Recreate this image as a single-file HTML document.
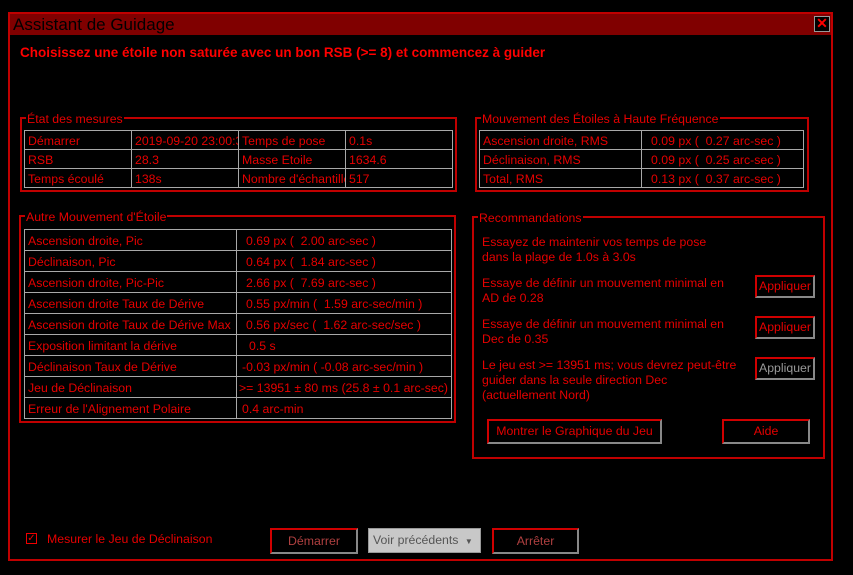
<!DOCTYPE html>
<html><head><meta charset="utf-8"><style>
*{box-sizing:border-box;margin:0;padding:0}
body{width:853px;height:575px;background:#000;position:relative;overflow:hidden;font-family:"Liberation Sans",Arial,sans-serif;font-size:12px;color:#e60000}
.a{position:absolute}
.frame{left:8px;top:12px;width:825px;height:549px;border:2px solid #c00000}
.title{left:10px;top:14px;width:821px;height:21px;background:#800000;color:#000;font-size:17px;line-height:22px;padding-left:3px}
.close{left:814px;top:16px;width:16px;height:16px;border:1px solid #999;background:#000;color:#f00;font-weight:bold;font-size:14px;line-height:13px;text-align:center}
.head{left:20px;top:45px;font-weight:bold;font-size:13.5px;color:#f00}
.grp{border:2px solid #c00000}
.lg{position:absolute;top:-7px;left:4px;background:#000;padding:0 1px;line-height:14px;font-size:12.3px}
table{position:absolute;border-collapse:collapse}
td{border:1px solid #a8a8a8;padding:2px 0 0 3px;white-space:nowrap;overflow:hidden;line-height:14px;font-size:12.3px}
.btn{border:2px solid #d00000;border-right-color:#888;border-bottom-color:#888;text-align:center;color:#e60000;font-size:12.3px}
.t{line-height:15px;font-size:12.3px}
</style></head><body>
<div class="a frame"></div>
<div class="a title">Assistant de Guidage</div>
<div class="a close">✕</div>
<div class="a head">Choisissez une étoile non saturée avec un bon RSB (&gt;= 8) et commencez à guider</div>

<div class="a grp" style="left:20px;top:117px;width:437px;height:75px"><span class="lg">État des mesures</span></div>
<table style="left:24px;top:130px;width:429px">
<tr style="height:19px"><td style="width:107px">Démarrer</td><td style="width:107px;max-width:107px">2019-09-20 23:00:38</td><td style="width:107px;max-width:107px">Temps de pose</td><td>0.1s</td></tr>
<tr style="height:19px"><td>RSB</td><td>28.3</td><td>Masse Etoile</td><td>1634.6</td></tr>
<tr style="height:19px"><td>Temps écoulé</td><td>138s</td><td style="max-width:107px">Nombre d'échantillons</td><td>517</td></tr>
</table>

<div class="a grp" style="left:475px;top:117px;width:334px;height:75px"><span class="lg">Mouvement des Étoiles à Haute Fréquence</span></div>
<table style="left:479px;top:130px;width:325px">
<tr style="height:19px"><td style="width:162px">Ascension droite, RMS</td><td style="padding-left:9px">0.09 px (&nbsp; 0.27 arc-sec )</td></tr>
<tr style="height:19px"><td>Déclinaison, RMS</td><td style="padding-left:9px">0.09 px (&nbsp; 0.25 arc-sec )</td></tr>
<tr style="height:19px"><td>Total, RMS</td><td style="padding-left:9px">0.13 px (&nbsp; 0.37 arc-sec )</td></tr>
</table>

<div class="a grp" style="left:19px;top:215px;width:437px;height:208px"><span class="lg">Autre Mouvement d'Étoile</span></div>
<table style="left:24px;top:229px;width:428px">
<tr style="height:21px"><td style="width:212px">Ascension droite, Pic</td><td style="padding-left:9px">0.69 px (&nbsp; 2.00 arc-sec )</td></tr>
<tr style="height:21px"><td>Déclinaison, Pic</td><td style="padding-left:9px">0.64 px (&nbsp; 1.84 arc-sec )</td></tr>
<tr style="height:21px"><td>Ascension droite, Pic-Pic</td><td style="padding-left:9px">2.66 px (&nbsp; 7.69 arc-sec )</td></tr>
<tr style="height:21px"><td>Ascension droite Taux de Dérive</td><td style="padding-left:9px">0.55 px/min (&nbsp; 1.59 arc-sec/min )</td></tr>
<tr style="height:21px"><td>Ascension droite Taux de Dérive Max</td><td style="padding-left:9px">0.56 px/sec (&nbsp; 1.62 arc-sec/sec )</td></tr>
<tr style="height:21px"><td>Exposition limitant la dérive</td><td style="padding-left:12px">0.5 s</td></tr>
<tr style="height:21px"><td>Déclinaison Taux de Dérive</td><td style="padding-left:5px">-0.03 px/min ( -0.08 arc-sec/min )</td></tr>
<tr style="height:21px"><td>Jeu de Déclinaison</td><td style="padding-left:2px">&gt;= 13951 ± 80 ms (25.8 ± 0.1 arc-sec)</td></tr>
<tr style="height:21px"><td>Erreur de l'Alignement Polaire</td><td style="padding-left:5px">0.4 arc-min</td></tr>
</table>

<div class="a grp" style="left:472px;top:216px;width:353px;height:243px"><span class="lg">Recommandations</span></div>
<div class="a t" style="left:482px;top:235px">Essayez de maintenir vos temps de pose<br>dans la plage de 1.0s à 3.0s</div>
<div class="a t" style="left:482px;top:276px">Essaye de définir un mouvement minimal en<br>AD de 0.28</div>
<div class="a t" style="left:482px;top:317px">Essaye de définir un mouvement minimal en<br>Dec de 0.35</div>
<div class="a t" style="left:482px;top:358px">Le jeu est &gt;= 13951 ms; vous devrez peut-être<br>guider dans la seule direction Dec<br>(actuellement Nord)</div>
<div class="a btn" style="left:755px;top:275px;width:60px;height:23px;line-height:19px">Appliquer</div>
<div class="a btn" style="left:755px;top:316px;width:60px;height:23px;line-height:19px">Appliquer</div>
<div class="a btn" style="left:755px;top:357px;width:60px;height:23px;line-height:19px;color:#999">Appliquer</div>
<div class="a btn" style="left:487px;top:419px;width:175px;height:25px;line-height:21px">Montrer le Graphique du Jeu</div>
<div class="a btn" style="left:722px;top:419px;width:88px;height:25px;line-height:21px">Aide</div>

<div class="a" style="left:26px;top:533px;width:11px;height:11px;border:1px solid #e00;color:#e00;font-size:10px;line-height:9px;text-align:center">✓</div>
<div class="a" style="left:47px;top:532px;font-size:12.3px">Mesurer le Jeu de Déclinaison</div>
<div class="a btn" style="left:270px;top:528px;width:88px;height:26px;line-height:22px;color:#b04040">Démarrer</div>
<div class="a" style="left:368px;top:528px;width:113px;height:25px;background:#c8c8c8;border:1px solid #999;color:#555;line-height:23px;padding-left:4px;font-size:12.3px">Voir précédents <span style="font-size:8px;margin-left:3px">▼</span></div>
<div class="a btn" style="left:492px;top:528px;width:87px;height:26px;line-height:22px;color:#b04040">Arrêter</div>
</body></html>
